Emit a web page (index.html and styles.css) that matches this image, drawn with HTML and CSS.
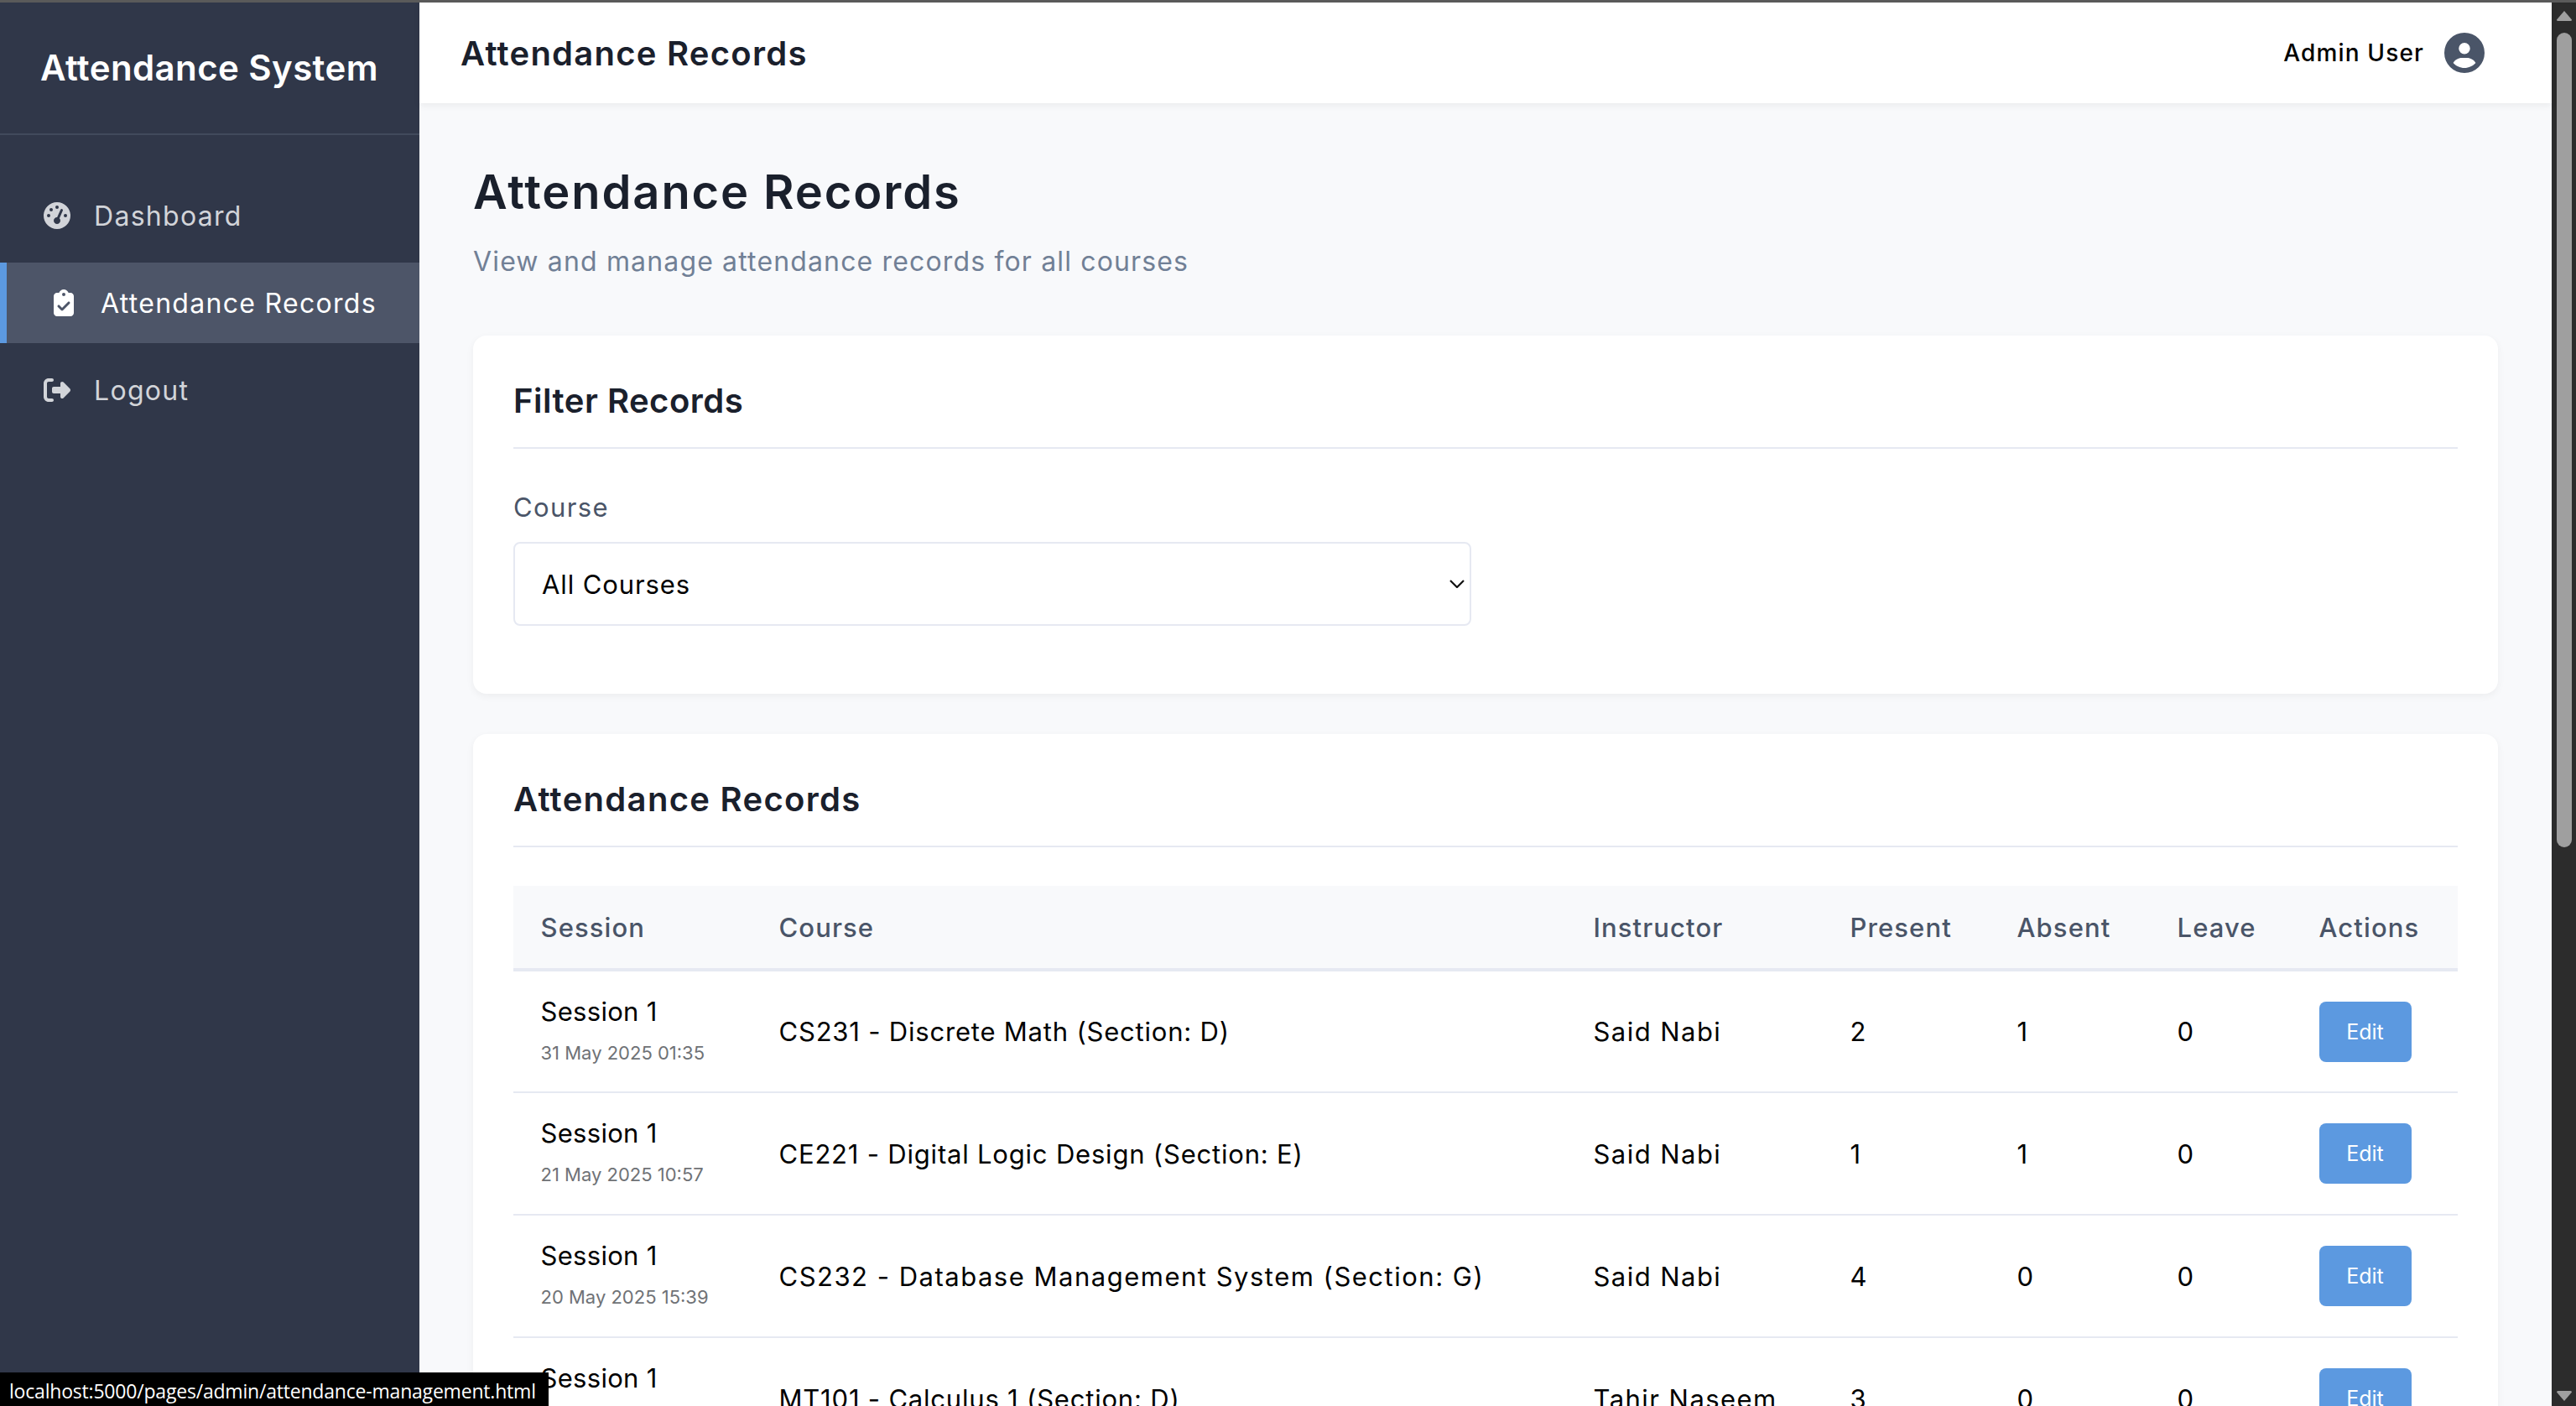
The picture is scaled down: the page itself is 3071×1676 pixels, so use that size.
FILE: index.html
```html
<!DOCTYPE html>
<html lang="en">
<head>
<meta charset="UTF-8">
<meta name="viewport" content="width=device-width, initial-scale=1.0">
<title>Attendance Records</title>
<link rel="stylesheet" href="styles.css">
</head>
<body>

<div class="app">
  <aside class="sidebar">
    <div class="brand">Attendance System</div>
    <nav class="nav">
      <a class="nav-item" href="#">
        <svg class="nav-icon" viewBox="0 0 512 512"><path d="M0 256a256 256 0 1 1 512 0A256 256 0 1 1 0 256zM288 96a32 32 0 1 0 -64 0 32 32 0 1 0 64 0zM256 416c35.3 0 64-28.7 64-64c0-17.4-6.9-33.1-18.1-44.6L366 161.7c5.3-12.1-.2-26.3-12.3-31.6s-26.3 .2-31.6 12.3L257.9 288c-.6 0-1.3 0-1.9 0c-35.3 0-64 28.7-64 64s28.7 64 64 64zM176 144a32 32 0 1 0 -64 0 32 32 0 1 0 64 0zM96 288a32 32 0 1 0 0-64 32 32 0 1 0 0 64zm352-32a32 32 0 1 0 -64 0 32 32 0 1 0 64 0z"/></svg>
        <span>Dashboard</span>
      </a>
      <a class="nav-item active" href="#">
        <svg class="nav-icon" viewBox="0 0 384 512"><path d="M192 0c-41.8 0-77.4 26.7-90.5 64H64C28.7 64 0 92.7 0 128V448c0 35.3 28.7 64 64 64H320c35.3 0 64-28.7 64-64V128c0-35.3-28.7-64-64-64H282.5C269.4 26.7 233.8 0 192 0zm0 64a32 32 0 1 1 0 64 32 32 0 1 1 0-64zM305 273L177 401c-9.4 9.4-24.6 9.4-33.9 0L79 337c-9.4-9.4-9.4-24.6 0-33.9s24.6-9.4 33.9 0l47 47L271 239c9.4-9.4 24.6-9.4 33.9 0s9.4 24.6 0 33.9z"/></svg>
        <span>Attendance Records</span>
      </a>
      <a class="nav-item" href="#">
        <svg class="nav-icon" viewBox="0 0 512 512"><path d="M377.9 105.9L500.7 228.7c7.2 7.2 11.3 17.1 11.3 27.3s-4.1 20.1-11.3 27.3L377.9 406.1c-6.4 6.4-15 9.9-24 9.9c-18.7 0-33.9-15.2-33.9-33.9l0-62.1-128 0c-17.7 0-32-14.3-32-32l0-64c0-17.7 14.3-32 32-32l128 0 0-62.1c0-18.7 15.2-33.9 33.9-33.9c9 0 17.6 3.6 24 9.9zM160 96L96 96c-17.7 0-32 14.3-32 32l0 256c0 17.7 14.3 32 32 32l64 0c17.7 0 32 14.3 32 32s-14.3 32-32 32l-64 0c-53 0-96-43-96-96L0 128C0 75 43 32 96 32l64 0c17.7 0 32 14.3 32 32s-14.3 32-32 32z"/></svg>
        <span>Logout</span>
      </a>
    </nav>
  </aside>

  <div class="main">
    <header class="topbar">
      <div class="topbar-title">Attendance Records</div>
      <div class="user">
        <span>Admin User</span>
        <svg class="user-icon" viewBox="0 0 512 512"><path d="M399 384.2C376.9 345.8 335.4 320 288 320H224c-47.4 0-88.9 25.8-111 64.2c35.2 39.2 86.2 63.8 143 63.8s107.8-24.7 143-63.8zM0 256a256 256 0 1 1 512 0A256 256 0 1 1 0 256zm256 16a72 72 0 1 0 0-144 72 72 0 1 0 0 144z"/></svg>
      </div>
    </header>

    <div class="content">
      <h1 class="page-title">Attendance Records</h1>
      <p class="page-sub">View and manage attendance records for all courses</p>

      <section class="card">
        <h2 class="card-title card-title-short">Filter Records</h2>
        <label class="field-label" for="course">Course</label>
        <select class="field-select" id="course">
          <option>All Courses</option>
        </select>
      </section>

      <section class="card">
        <h2 class="card-title">Attendance Records</h2>
        <table class="records">
          <thead>
            <tr>
              <th class="col-session">Session</th>
              <th class="col-course">Course</th>
              <th class="col-instructor">Instructor</th>
              <th class="col-present">Present</th>
              <th class="col-absent">Absent</th>
              <th class="col-leave">Leave</th>
              <th class="col-actions">Actions</th>
            </tr>
          </thead>
          <tbody>
            <tr>
              <td><div class="session">Session 1</div><div class="date">31 May 2025 01:35</div></td>
              <td class="course">CS231 - Discrete Math (Section: D)</td>
              <td class="instructor">Said Nabi</td>
              <td>2</td>
              <td>1</td>
              <td>0</td>
              <td><button class="btn-edit">Edit</button></td>
            </tr>
            <tr>
              <td><div class="session">Session 1</div><div class="date">21 May 2025 10:57</div></td>
              <td class="course">CE221 - Digital Logic Design (Section: E)</td>
              <td class="instructor">Said Nabi</td>
              <td>1</td>
              <td>1</td>
              <td>0</td>
              <td><button class="btn-edit">Edit</button></td>
            </tr>
            <tr>
              <td><div class="session">Session 1</div><div class="date">20 May 2025 15:39</div></td>
              <td class="course course-wide">CS232 - Database Management System (Section: G)</td>
              <td class="instructor">Said Nabi</td>
              <td>4</td>
              <td>0</td>
              <td>0</td>
              <td><button class="btn-edit">Edit</button></td>
            </tr>
            <tr>
              <td><div class="session">Session 1</div><div class="date">&nbsp;</div></td>
              <td class="course">MT101 - Calculus 1 (Section: D)</td>
              <td class="instructor">Tahir Naseem</td>
              <td>3</td>
              <td>0</td>
              <td>0</td>
              <td><button class="btn-edit">Edit</button></td>
            </tr>
          </tbody>
        </table>
      </section>
    </div>
  </div>

  <div class="scrollbar">
    <svg class="scroll-arrow" viewBox="0 0 18 12"><path d="M9 0L18 10.5Q18 12 16.5 12H1.5Q0 12 0 10.5Z"/></svg>
    <div class="scroll-thumb"></div>
    <svg class="scroll-arrow scroll-arrow-down" viewBox="0 0 18 12"><path d="M9 12L18 1.5Q18 0 16.5 0H1.5Q0 0 0 1.5Z"/></svg>
  </div>
</div>

<div class="status-bubble">localhost:5000/pages/admin/attendance-management.html</div>

</body>
</html>
```

FILE: styles.css
```css
* {
  box-sizing: border-box;
}
html, body {
  height: 100%;
}
body {
  margin: 0;
  overflow: hidden;
  border-top: 3px solid #5a5a5a;
  background-color: #f8f9fb;
  color: #000;
  font-family: Inter, "Noto Sans", sans-serif;
}
.app {
  display: flex;
  height: 100%;
}

/* sidebar */
.sidebar {
  flex: 0 0 500px;
  background-color: #303749;
  color: #fff;
}
.brand {
  height: 158px;
  padding: 0 0 2px 48px;
  display: flex;
  align-items: center;
  border-bottom: 2px solid #414a5c;
  font-size: 42px;
  font-weight: 600;
  letter-spacing: 0.4px;
}
.nav {
  padding-top: 48px;
}
.nav-item {
  display: flex;
  align-items: center;
  gap: 28px;
  height: 96px;
  margin-bottom: 8px;
  padding-left: 52px;
  color: #d2d4d9;
  font-size: 32px;
  letter-spacing: 1.3px;
  text-decoration: none;
}
.nav-item.active {
  background-color: #4d5568;
  border-left: 8px solid #5c99e0;
  color: #fff;
}
.nav-icon {
  flex: 0 0 32px;
  width: 32px;
  height: 32px;
  fill: currentColor;
}

/* main area */
.main {
  flex: 1;
  min-width: 0;
}
.topbar {
  display: flex;
  align-items: center;
  justify-content: space-between;
  position: relative;
  height: 120px;
  padding: 0 80px 0 49px;
  background-color: #fff;
  box-shadow: 0 3px 8px rgba(0, 0, 0, 0.06);
}
.topbar-title {
  font-size: 40px;
  font-weight: 600;
  letter-spacing: 1.25px;
  color: #1a202c;
}
.user {
  display: flex;
  align-items: center;
  gap: 24px;
  font-size: 28px;
  font-weight: 500;
  letter-spacing: 1.15px;
}
.user-icon {
  width: 48px;
  height: 48px;
  fill: #4a5568;
}
.content {
  padding: 71px 64px 0;
}
.page-title {
  margin: 0;
  font-size: 56px;
  line-height: 70px;
  font-weight: 600;
  letter-spacing: 1.9px;
  color: #1a202c;
}
.page-sub {
  margin: 24px 0 64px;
  font-size: 32px;
  line-height: 48px;
  letter-spacing: 1.15px;
  color: #718096;
}
.card {
  margin-bottom: 48px;
  padding: 53px 48px 81px;
  background-color: #fff;
  border-radius: 16px;
  box-shadow: 0 3px 10px rgba(0, 0, 0, 0.05);
}
.card-title {
  margin: 0 0 46px;
  padding-bottom: 30px;
  border-bottom: 2px solid #e6e9f2;
  font-size: 40px;
  line-height: 50px;
  font-weight: 600;
  letter-spacing: 1.3px;
  color: #1a202c;
}
.card-title-short {
  margin-bottom: 50px;
  letter-spacing: 0.5px;
}
.field-label {
  display: block;
  margin-bottom: 21px;
  font-size: 31px;
  line-height: 40px;
  letter-spacing: 1.4px;
  color: #4a5568;
}
.field-select {
  display: block;
  width: 1142px;
  height: 100px;
  padding: 0 40px 0 32px;
  appearance: none;
  background: #fff url("data:image/svg+xml,%3Csvg xmlns='http://www.w3.org/2000/svg' viewBox='0 0 18 10'%3E%3Cpath d='M1 1l8 8 8-8' fill='none' stroke='%23111' stroke-width='2.2'/%3E%3C/svg%3E") no-repeat right 6px center / 18px 10px;
  border: 2px solid #e6e9f2;
  border-radius: 8px;
  color: #000;
  font-family: inherit;
  font-size: 31px;
  letter-spacing: 0.9px;
}

/* table */
.records {
  width: 100%;
  table-layout: fixed;
  border-collapse: collapse;
}
.records th {
  height: 100px;
  padding: 0 0 0 32.5px;
  background-color: #f8f9fb;
  border-bottom: 4px solid #e6e9f2;
  text-align: left;
  font-size: 31px;
  font-weight: 500;
  letter-spacing: 1.1px;
  color: #4a5568;
}
.records td {
  height: 146px;
  padding: 0 0 0 32.5px;
  border-bottom: 2px solid #e6e9f2;
  font-size: 31px;
}
.col-session { width: 284px; }
.col-course { width: 971px; }
.col-instructor { width: 306px; }
.col-present { width: 199px; }
.col-absent { width: 191px; }
.col-leave { width: 169px; }
.col-actions { width: 198px; }
.course {
  letter-spacing: 0.8px;
}
.course-wide {
  letter-spacing: 1.5px;
}
.instructor {
  letter-spacing: 1.45px;
}
.session {
  line-height: 44px;
  letter-spacing: 0.3px;
}
.date {
  margin-top: 12px;
  padding-bottom: 6px;
  font-size: 22px;
  line-height: 30px;
  color: #6f7276;
}
.btn-edit {
  display: block;
  width: 110px;
  height: 72px;
  padding: 0;
  background-color: #5c99e0;
  border: 0;
  border-radius: 8px;
  color: #fff;
  font-family: inherit;
  font-size: 25px;
}

/* browser chrome */
.scrollbar {
  flex: 0 0 29px;
  display: flex;
  flex-direction: column;
  align-items: center;
  padding-top: 10px;
  background-color: #2c2c2c;
}
.scroll-arrow {
  flex: none;
  width: 18px;
  height: 12px;
  fill: #9f9f9f;
}
.scroll-arrow-down {
  margin-top: auto;
  margin-bottom: 6px;
}
.scroll-thumb {
  width: 18px;
  height: 971px;
  margin-top: 14px;
  background-color: #9f9f9f;
  border-radius: 9px;
}
.status-bubble {
  position: absolute;
  left: 0;
  bottom: 0;
  width: 654px;
  height: 40px;
  padding-left: 11px;
  background-color: #000;
  color: #fff;
  font-family: "Open Sans", sans-serif;
  font-size: 23px;
  line-height: 44px;
  letter-spacing: -0.2px;
  white-space: nowrap;
  overflow: hidden;
}
```
